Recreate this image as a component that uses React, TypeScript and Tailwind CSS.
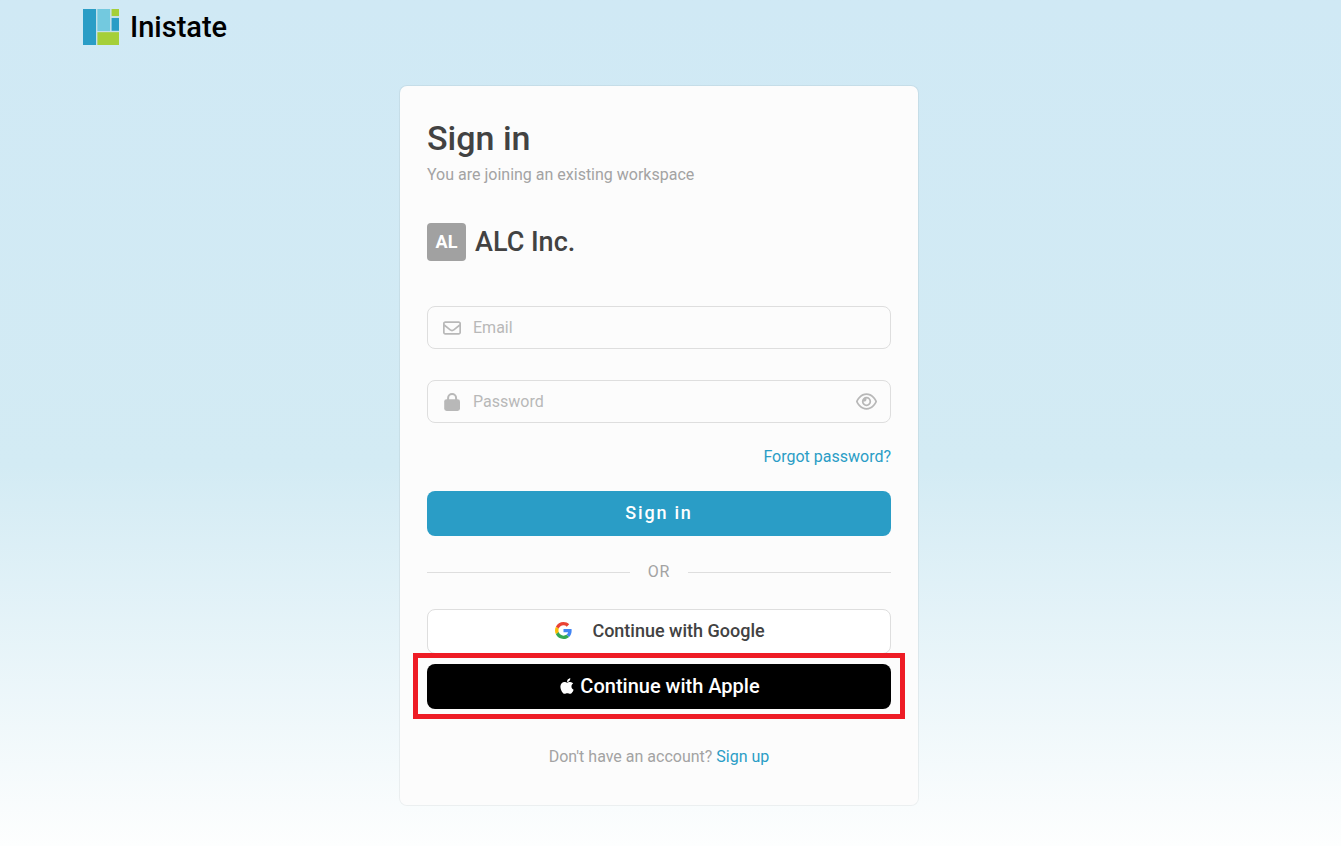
import React, { useState } from 'react';
import { FaApple, FaRegEnvelope, FaRegEye } from 'react-icons/fa6';

const Logo = () => (
  <svg width="36" height="36" viewBox="0 0 36 36" aria-hidden="true">
    <rect width="36" height="36" fill="#c3e0ea" />
    <rect width="13" height="36" fill="#2a9dc6" />
    <rect x="14.4" width="12.6" height="22" fill="#73c9df" />
    <rect x="28.6" width="7.4" height="7" fill="#a5cf39" />
    <rect x="28.6" y="9" width="7.4" height="12.8" fill="#2a9dc6" />
    <rect x="14.4" y="23.2" width="21.6" height="12.8" fill="#a5cf39" />
  </svg>
);

const GoogleLogo = () => (
  <svg width="17" height="17" viewBox="0 0 48 48" aria-hidden="true">
    <path fill="#EA4335" d="M24 9.5c3.54 0 6.71 1.22 9.21 3.6l6.85-6.85C35.9 2.38 30.47 0 24 0 14.62 0 6.51 5.38 2.56 13.22l7.98 6.19C12.43 13.72 17.74 9.5 24 9.5z" />
    <path fill="#4285F4" d="M46.98 24.55c0-1.57-.15-3.09-.38-4.55H24v9.02h12.94c-.58 2.96-2.26 5.48-4.78 7.18l7.73 6c4.51-4.18 7.09-10.36 7.09-17.65z" />
    <path fill="#FBBC05" d="M10.53 28.59c-.48-1.45-.76-2.99-.76-4.59s.27-3.14.76-4.59l-7.98-6.19C.92 16.46 0 20.12 0 24c0 3.88.92 7.54 2.56 10.78l7.97-6.19z" />
    <path fill="#34A853" d="M24 48c6.48 0 11.93-2.13 15.89-5.81l-7.73-6c-2.15 1.45-4.92 2.3-8.16 2.3-6.26 0-11.57-4.22-13.47-9.91l-7.98 6.19C6.51 42.62 14.62 48 24 48z" />
  </svg>
);

const LockIcon = () => (
  <svg width="18" height="18" viewBox="0 0 18 18" aria-hidden="true">
    <rect x="1.2" y="6.2" width="15.8" height="11.8" rx="2.4" fill="currentColor" />
    <path d="M5.1 7.5V5a4 4 0 0 1 8 0v2.5" fill="none" stroke="currentColor" strokeWidth="2" />
  </svg>
);

const App = () => {
  const [showPassword, setShowPassword] = useState(false);

  return (
    <div className="min-h-screen bg-linear-to-b from-[#d0e9f5] from-0% via-[#d3ebf4] via-55% to-[#fdfefe] pr-[23px] font-['Roboto',sans-serif] text-[#424242]">
      <header className="flex items-center gap-[11px] pt-[9px] pl-[83px]">
        <Logo />
        <span className="text-[29px] leading-9 font-medium text-black">Inistate</span>
      </header>

      <main className="mx-auto mt-10 w-full max-w-[520px] rounded-lg border border-black/5 bg-[#fcfcfc] bg-clip-padding px-[27px] pt-8 pb-9">
        <h1 className="text-[34px] leading-10 font-medium">Sign in</h1>
        <p className="mt-[5px] text-base text-[#a3a3a3]">You are joining an existing workspace</p>

        <div className="mt-9 flex items-center gap-[9px]">
          <div className="flex h-[38px] w-[39px] items-center justify-center rounded bg-[#a1a1a1] text-lg font-bold text-white">
            AL
          </div>
          <h2 className="text-[27px] leading-9 font-medium">ALC Inc.</h2>
        </div>

        <form className="mt-[45px]" onSubmit={(e) => e.preventDefault()}>
          <label className="flex h-[43px] items-center gap-3 rounded-lg border border-[#dedede] px-[15px] text-[#b8b8b8]">
            <FaRegEnvelope size={18} />
            <input
              type="email"
              aria-label="Email"
              placeholder="Email"
              className="min-w-0 flex-1 outline-none placeholder:text-[#b8b8b8]"
            />
          </label>

          <div className="mt-[31px] flex h-[43px] items-center gap-3 rounded-lg border border-[#dedede] pr-[13px] pl-[15px] text-[#b8b8b8]">
            <LockIcon />
            <input
              type={showPassword ? 'text' : 'password'}
              aria-label="Password"
              placeholder="Password"
              className="min-w-0 flex-1 outline-none placeholder:text-[#b8b8b8]"
            />
            <button type="button" aria-label="Show password" onClick={() => setShowPassword(!showPassword)}>
              <FaRegEye size={21} />
            </button>
          </div>

          <div className="mt-[22px] text-right">
            <a href="#" className="text-[#2a9dc6]">Forgot password?</a>
          </div>

          <button type="submit" className="mt-[22px] h-[45px] w-full rounded-lg bg-[#2a9dc6] pb-0.5 text-lg font-medium tracking-widest text-white">
            Sign in
          </button>
        </form>

        {/* Divider */}
        <div className="mt-6 flex items-center gap-[18px] text-base tracking-wider text-[#a3a3a3]">
          <div className="h-px flex-1 bg-[#dedede]" />
          OR
          <div className="h-px flex-1 bg-[#dedede]" />
        </div>

        {/* Social logins */}
        <button className="mt-[25px] flex h-[45px] w-full items-center justify-center gap-5 rounded-lg border border-[#dedede] bg-white pb-0.5 pl-0.5 text-lg font-medium">
          <GoogleLogo />
          Continue with Google
        </button>
        <div className="relative mt-[10px]">
          <button className="flex h-[45px] w-full items-center justify-center gap-1 rounded-lg bg-black pb-0.5 text-xl font-medium text-white">
            <FaApple size={18} />
            Continue with Apple
          </button>
          <div className="pointer-events-none absolute -inset-x-[14px] -top-[11px] -bottom-[10px] border-5 border-[#ee1c25]" />
        </div>

        <p className="mt-9 text-center text-base text-[#a3a3a3]">
          Don't have an account? <a href="#" className="text-[#2a9dc6]">Sign up</a>
        </p>
      </main>
    </div>
  );
};

export default App;
